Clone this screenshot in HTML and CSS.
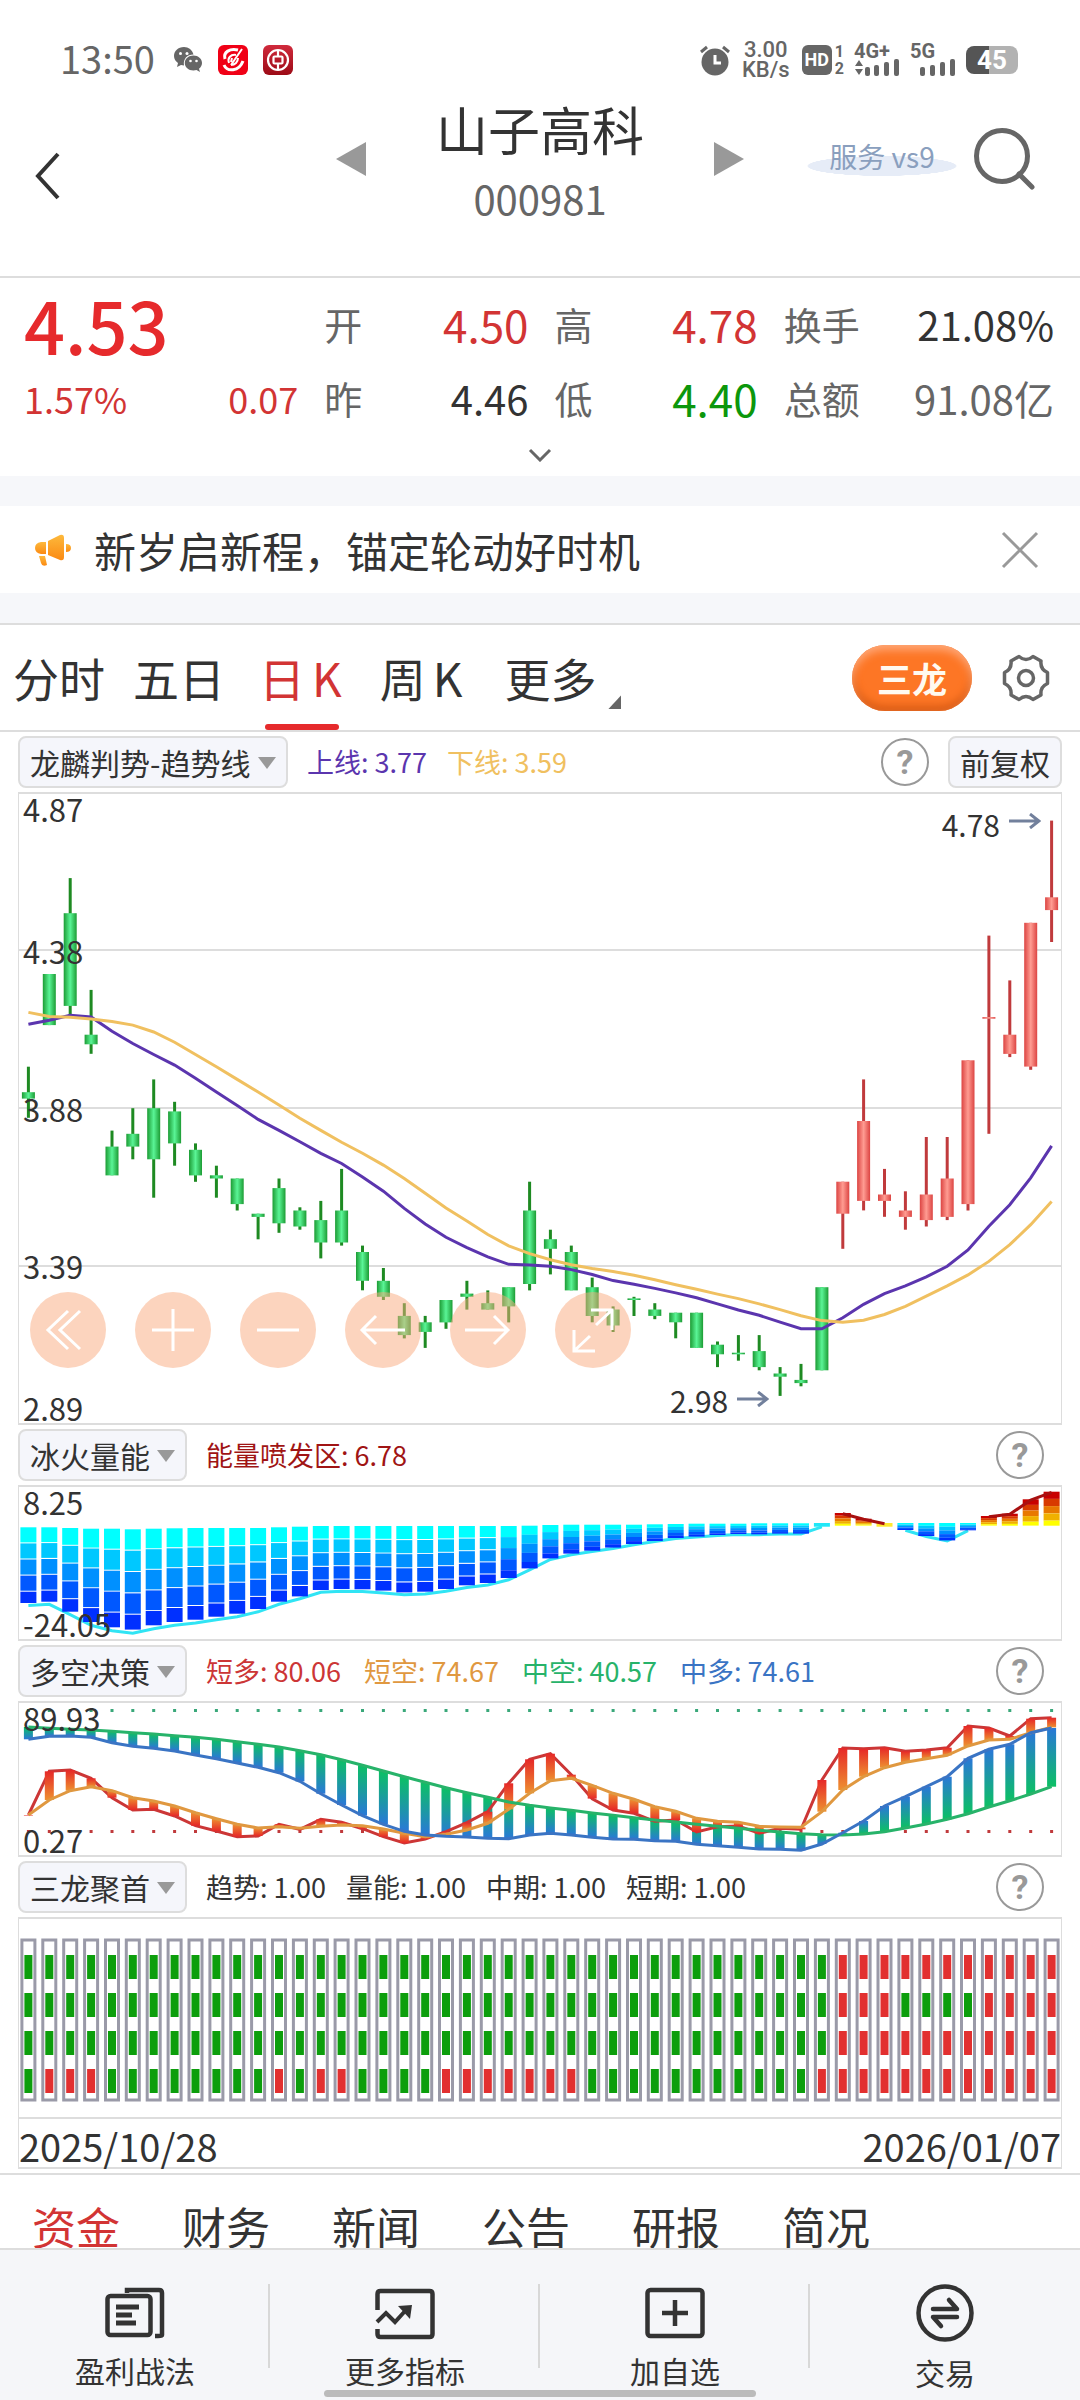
FILE: index.html
```html
<!DOCTYPE html>
<html lang="zh-CN">
<head>
<meta charset="utf-8">
<meta name="viewport" content="width=device-width, initial-scale=1">
<title>山子高科 000981</title>
<link rel="stylesheet" href="styles.css">
</head>
<body>
<div class="status">
  <span class="status-time">13:50</span>
  <svg class="status-wechat" width="30" height="28" viewBox="0 0 30 28"><path fill="#666" d="M11 1C5 1 1 5 1 10c0 3 1.500 5 4 7l-1 4 4-2c1 .3 2 .4 3 .4C10 13 14 8.500 20.500 8.500 19.500 4 15.500 1 11 1z"/><path fill="#666" d="M20.500 9.500c-5 0-8.700 3.300-8.700 7.500s3.700 7.500 8.700 7.500c1 0 2-.2 3-.5l3.500 2-1-3.300c2-1.500 3-3.500 3-5.700 0-4.200-3.800-7.500-8.500-7.500z"/><g fill="#fff"><circle cx="7.500" cy="7.500" r="1.500"/><circle cx="14" cy="7.500" r="1.500"/><circle cx="17.500" cy="15" r="1.300"/><circle cx="23.500" cy="15" r="1.300"/></g></svg>
  <svg class="status-app" width="30" height="30" viewBox="0 0 30 30"><rect width="30" height="30" rx="6" fill="#f00016"/><g fill="none" stroke="#fff"><path stroke-width="3" d="M20 5C12 3 5 7 7 14M6 20c3 7 15 7 19-4"/><path stroke-width="2" d="M24 4 13 20M18 10c-5-1-9 3-7 8M20 13c0 4-3 7-7 7M14 13l-1 4"/></g></svg>
  <svg class="status-app" width="30" height="30" viewBox="0 0 30 30"><defs><linearGradient id="bankRed" x2="0" y2="1"><stop stop-color="#d02a3c"/><stop offset="1" stop-color="#9c0b16"/></linearGradient></defs><rect width="30" height="30" rx="6" fill="url(#bankRed)"/><g fill="none" stroke="#fff" stroke-width="2.200"><circle cx="15" cy="15" r="10"/><rect x="10.500" y="11.500" width="9" height="7" rx="1"/><path d="M15 5v6.500M15 18.500V25"/></g></svg>
  <div class="status-right">
    <svg width="30" height="32" viewBox="0 0 30 32"><circle cx="15" cy="18" r="13.500" fill="#666"/><path d="M1 8l6-5M29 8l-6-5" stroke="#666" stroke-width="3"/><path d="M15 11v8h6" fill="none" stroke="#fff" stroke-width="3"/></svg>
    <span class="status-rate"><span>3.00</span><span>KB/s</span></span>
    <span class="status-hd">HD</span>
    <span class="status-sims"><span>1</span><span>2</span></span>
    <span class="signal"><span>4G+</span><svg width="46" height="17" viewBox="0 0 46 17" fill="#666"><path d="M5 1l4 6H1zM5 16l4-6H1z"/><rect x="11" y="8" width="5" height="9" rx="2"/><rect x="20" y="6" width="5" height="11" rx="2"/><rect x="30" y="3" width="5" height="14" rx="2"/><rect x="40" y="0" width="5" height="17" rx="2"/></svg></span>
    <span class="signal"><span>5G</span><svg width="46" height="17" viewBox="0 0 46 17" fill="#666"><rect x="10" y="8" width="5" height="9" rx="2"/><rect x="20" y="6" width="5" height="11" rx="2"/><rect x="30" y="3" width="5" height="14" rx="2"/><rect x="40" y="0" width="5" height="17" rx="2"/></svg></span>
    <span class="battery">45</span>
  </div>
</div>

<header class="header">
  <button class="icon-btn back" aria-label="返回"><svg width="28" height="48" viewBox="0 0 28 48"><path d="M24 2 4 24l20 22" fill="none" stroke="#333" stroke-width="4"/></svg></button>
  <div class="stock">
    <button class="icon-btn" aria-label="上一只"><svg width="30" height="34" viewBox="0 0 30 34"><path d="M0 17 30 0v34z" fill="#999"/></svg></button>
    <div class="stock-title">
      <h1>山子高科</h1>
      <p>000981</p>
    </div>
    <button class="icon-btn" aria-label="下一只"><svg width="30" height="34" viewBox="0 0 30 34"><path d="M30 17 0 0v34z" fill="#999"/></svg></button>
  </div>
  <div class="header-tools">
    <a class="service" href="#">服务 vs9</a>
    <button class="icon-btn" aria-label="搜索"><svg width="66" height="66" viewBox="0 0 66 66"><g fill="none" stroke="#666" stroke-width="5" stroke-linecap="round"><circle cx="30" cy="30" r="25.500"/><path d="M47 48l13 13"/></g></svg></button>
  </div>
</header>

<section class="quote">
  <div class="quote-grid">
    <div class="last">4.53</div>
    <div class="pair"><span>开</span><b class="up big">4.50</b></div>
    <div class="pair"><span>高</span><b class="up big">4.78</b></div>
    <div class="pair"><span>换手</span><b>21.08%</b></div>
    <div class="pair change up"><span>1.57%</span><b>0.07</b></div>
    <div class="pair"><span>昨</span><b>4.46</b></div>
    <div class="pair"><span>低</span><b class="down big">4.40</b></div>
    <div class="pair"><span>总额</span><b class="muted">91.08亿</b></div>
  </div>
  <button class="icon-btn expand" aria-label="展开"><svg width="24" height="14" viewBox="0 0 24 14"><path d="M2 2l10 10L22 2" fill="none" stroke="#666" stroke-width="3"/></svg></button>
</section>

<section class="notice">
  <svg width="36" height="32" viewBox="0 0 36 32"><defs><linearGradient id="horn" x2="0" y2="1"><stop stop-color="#fdb93c"/><stop offset="1" stop-color="#fb8a13"/></linearGradient></defs><g fill="url(#horn)"><path d="M13 7 25 1q4-1 4 3v19q0 4-4 3l-12-5z"/><path d="M11 8v12H6q-6-1-6-6t6-6z"/><path d="M4 22h6l2 9q-5 2-6-2z"/><path d="M31 10q5 0 5 4t-5 4z"/></g></svg>
  <p>新岁启新程，锚定轮动好时机</p>
  <button class="icon-btn" aria-label="关闭"><svg width="38" height="38" viewBox="0 0 38 38"><path d="M2 2l34 34M36 2 2 36" stroke="#999" stroke-width="3"/></svg></button>
</section>

<nav class="periods">
  <button class="period">分时</button>
  <button class="period">五日</button>
  <button class="period k active">日<span>K</span></button>
  <button class="period k">周<span>K</span></button>
  <button class="period more">更多</button>
  <button class="dragon">三龙</button>
  <button class="icon-btn" aria-label="设置"><svg width="48" height="48" viewBox="0 0 48 48"><g fill="none" stroke="#666" stroke-width="3.500" stroke-linejoin="round"><path d="M17 2.500q7 6 14 0l8 4.500q-1 8 6.500 11.500v11Q38 33 39 41l-8 4.500q-7-6-14 0L9 41q1-8-6.500-11.500v-11Q10 15 9 7z"/><circle cx="24" cy="24" r="7.500"/></g></svg></button>
</nav>

<main class="charts">
  <div class="ind">
    <label class="pick"><select aria-label="主图指标"><option>龙麟判势-趋势线</option></select></label>
    <div class="vals"><span class="c-purple">上线: 3.77</span><span class="c-gold">下线: 3.59</span></div>
    <button class="help" aria-label="帮助">?</button>
    <button class="adjust">前复权</button>
  </div>
  <div class="panel panel-main">
    <svg id="kline" class="plot" viewBox="1 2 1042 629" preserveAspectRatio="none"></svg>
    <div class="scale"><span>4.87</span><span>4.38</span><span>3.88</span><span>3.39</span><span>2.89</span></div>
    <div class="mark mark-high">4.78<svg width="32" height="16" viewBox="0 0 32 16"><path d="M0 8h29M21 1l9 7-9 7" fill="none" stroke="#72809c" stroke-width="3"/></svg></div>
    <div class="mark mark-low">2.98<svg width="32" height="16" viewBox="0 0 32 16"><path d="M0 8h29M21 1l9 7-9 7" fill="none" stroke="#72809c" stroke-width="3"/></svg></div>
    <div class="float">
      <button aria-label="最早"><svg viewBox="0 0 76 76"><path d="M38 19 18 38l20 19M50 19 30 38l20 19"/></svg></button>
      <button aria-label="放大"><svg viewBox="0 0 76 76"><path d="M17 38h42M38 17v42"/></svg></button>
      <button aria-label="缩小"><svg viewBox="0 0 76 76"><path d="M17 38h42"/></svg></button>
      <button aria-label="左移"><svg viewBox="0 0 76 76"><path d="M60 38H17M31 24 17 38l14 14"/></svg></button>
      <button aria-label="右移"><svg viewBox="0 0 76 76"><path d="M15 38h43M44 24l14 14-14 14"/></svg></button>
      <button aria-label="全屏"><svg viewBox="0 0 76 76"><path d="M36 18h21v20M57 18 41 33M19 38v21h21M19 59l16-15"/></svg></button>
    </div>
  </div>

  <div class="ind">
    <label class="pick"><select aria-label="副图一指标"><option>冰火量能</option></select></label>
    <div class="vals"><span class="c-dark">能量喷发区: 6.78</span></div>
    <button class="help help-end" aria-label="帮助">?</button>
  </div>
  <div class="panel panel-sub">
    <svg id="energy" class="plot" viewBox="1 2 1042 152" preserveAspectRatio="none"></svg>
    <div class="scale"><span>8.25</span><span>-24.05</span></div>
  </div>

  <div class="ind">
    <label class="pick"><select aria-label="副图二指标"><option>多空决策</option></select></label>
    <div class="vals vals-wide"><span class="c-red">短多: 80.06</span><span class="c-orange">短空: 74.67</span><span class="c-green">中空: 40.57</span><span class="c-blue">中多: 74.61</span></div>
    <button class="help help-end" aria-label="帮助">?</button>
  </div>
  <div class="panel panel-sub">
    <svg id="decision" class="plot" viewBox="1 2 1042 152" preserveAspectRatio="none"></svg>
    <div class="scale"><span>89.93</span><span>0.27</span></div>
  </div>

  <div class="ind">
    <label class="pick"><select aria-label="副图三指标"><option>三龙聚首</option></select></label>
    <div class="vals"><span>趋势: 1.00</span><span>量能: 1.00</span><span>中期: 1.00</span><span>短期: 1.00</span></div>
    <button class="help help-end" aria-label="帮助">?</button>
  </div>
  <div class="panel panel-grid">
    <svg id="dragons" class="plot" viewBox="1 2 1042 198" preserveAspectRatio="none"></svg>
  </div>
  <div class="dates"><span>2025/10/28</span><span>2026/01/07</span></div>
</main>

<nav class="info">
  <button class="active">资金</button><button>财务</button><button>新闻</button><button>公告</button><button>研报</button><button>简况</button>
</nav>

<footer class="dock">
  <a href="#"><svg width="60" height="60" viewBox="0 0 60 60"><g fill="none" stroke="#333" stroke-width="4.500"><rect x="2.500" y="13" width="43" height="39" rx="3"/><path d="M22 10V7h32q3 0 3 3v42q0 1-4 1h-3" /><path d="M11 24h23M11 32h16M11 40h20" stroke-width="5"/></g></svg>盈利战法</a>
  <a href="#"><svg width="60" height="60" viewBox="0 0 60 60"><g fill="none" stroke="#333" stroke-width="4.500"><path d="M2.500 27V11q0-3 3-3h49q3 0 3 3v40q0 3-3 3h-49q-3 0-3-3v-5"/><path d="M2 39l9-9 9 9 11-12" stroke-width="4"/></g><path d="M23 23l14-1-2 14z" fill="#333"/></svg>更多指标</a>
  <a href="#"><svg width="60" height="60" viewBox="0 0 60 60"><g fill="none" stroke="#333" stroke-width="4.500"><rect x="2.500" y="7" width="55" height="46" rx="3"/><path d="M17 30h26M30 17v26"/></g></svg>加自选</a>
  <a class="trade" href="#"><svg width="60" height="60" viewBox="0 0 60 60"><g fill="none" stroke="#333" stroke-width="4.500" stroke-linecap="round" stroke-linejoin="round"><circle cx="30" cy="30" r="26.500"/><path d="M18 26h24l-8-9M42 34H18l8 9"/></g></svg>交易</a>
  <i class="home-bar"></i>
</footer>
<script src="charts.js"></script>
</body>
</html>
```

FILE: styles.css
```css
* { box-sizing: border-box; }

body {
  margin: 0;
  min-height: 100vh;
  display: flex;
  flex-direction: column;
  background: #fff;
  color: #333;
  font-family: "Noto Sans CJK SC", "Noto Sans", sans-serif;
}

h1, p { margin: 0; font-weight: 400; }
svg { display: block; }
button, select {
  border: 0;
  padding: 0;
  background: none;
  color: inherit;
  font: inherit;
}
a { color: inherit; text-decoration: none; }

.icon-btn { display: flex; }

/* status bar */
.status {
  display: flex;
  align-items: center;
  height: 100px;
  padding: 20px 62px 0 60px;
  color: #666;
}
.status-time { font-size: 38px; line-height: 56px; padding-bottom: 4px; }
.status-wechat { margin-left: 18px; }
.status-app { margin-left: 15px; }
.status-right {
  display: flex;
  align-items: center;
  margin-left: auto;
  font-family: Roboto, sans-serif;
  font-weight: 500;
}
.status-rate {
  display: flex;
  flex-direction: column;
  width: 50px;
  margin: 0 11px;
  font-size: 22px;
  line-height: 20px;
  text-align: center;
}
.status-hd {
  width: 30px;
  border-radius: 6px;
  background: #666;
  color: #fff;
  font-size: 18px;
  line-height: 30px;
  font-weight: 700;
  text-align: center;
}
.status-sims {
  display: flex;
  flex-direction: column;
  margin: 0 10px 0 3px;
  font-size: 16px;
  line-height: 17px;
  font-weight: 700;
}
.signal {
  width: 46px;
  margin-right: 10px;
  font-size: 20px;
  line-height: 15px;
  font-weight: 700;
}
.signal > span { display: block; white-space: nowrap; }
.battery {
  width: 52px;
  border-radius: 8px;
  background: linear-gradient(90deg, #555 45%, #b2b2b2 45%);
  color: #fff;
  font-size: 26px;
  line-height: 28px;
  font-weight: 700;
  text-align: center;
}

/* title bar */
.header {
  display: grid;
  grid-template-columns: 1fr auto 1fr;
  height: 178px;
  padding: 0 42px 0 34px;
  border-bottom: 2px solid #ddd;
}
.back { align-self: start; margin-top: 52px; }
.stock { display: flex; gap: 66px; padding-left: 8px; }
.stock .icon-btn { align-self: start; margin-top: 42px; }
.stock-title { width: 216px; text-align: center; white-space: nowrap; }
.stock-title h1 { font-size: 52px; line-height: 58px; }
.stock-title p { color: #666; font-size: 40px; line-height: 80px; }
.header-tools { display: flex; justify-content: flex-end; align-items: flex-start; padding-top: 26px; gap: 15px; }
.service {
  width: 150px;
  height: 50px;
  background: radial-gradient(ellipse 75px 10px at 50% 40px, #e6ecf7 98%, transparent);
  color: #8a9fbe;
  font-size: 28px;
  line-height: 60px;
  text-align: center;
  white-space: nowrap;
}

/* quote block */
.quote {
  display: flex;
  flex-direction: column;
  align-items: center;
  height: 198px;
  padding-top: 9px;
}
.quote-grid {
  display: grid;
  grid-template-columns: 274fr 204fr 203fr 270fr;
  grid-auto-rows: 74px;
  column-gap: 26px;
  width: 100%;
  padding: 0 26px 0 24px;
  align-items: center;
}
.last { color: #e62a2c; font-size: 72px; line-height: 76px; font-weight: 500; }
.pair { display: flex; justify-content: space-between; align-items: center; color: #666; font-size: 38px; line-height: 72px; white-space: nowrap; }
.pair b { color: #333; font-size: 40px; font-weight: 400; }
.pair b.big { font-size: 44px; }
.pair b.up, .change.up, .change.up b { color: #d23434; }
.pair b.down { color: #0c970c; }
.pair b.muted { color: #666; }
.change, .change.up b { font-size: 36px; }
.expand { margin-top: 13px; }

/* notice strip */
.notice {
  display: flex;
  align-items: center;
  height: 147px;
  padding: 0 41px 0 35px;
  border: solid #f6f7fa;
  border-width: 30px 0;
}
.notice p { flex: 1; margin-left: 23px; font-size: 42px; line-height: 64px; }

/* period tabs */
.periods {
  display: flex;
  align-items: center;
  height: 109px;
  padding: 0 30px 0 13px;
  border: solid #ddd;
  border-width: 2px 0;
}
.period {
  position: relative;
  height: 105px;
  margin-right: 28px;
  font-size: 46px;
  line-height: 103px;
  white-space: nowrap;
}
.period span { margin-left: 7px; }
.period.k { padding: 0 4px 0 6px; }
.period.active { color: #d23434; }
.period.active::after {
  content: "";
  position: absolute;
  left: 12px;
  right: 7px;
  bottom: 0;
  height: 6px;
  border-radius: 3px;
  background: #e62a2c;
}
.period.more { margin-left: 10px; }
.period.more::after {
  content: "";
  position: absolute;
  right: -25px;
  bottom: 21px;
  width: 13px;
  height: 14px;
  background: #666;
  clip-path: polygon(100% 0, 100% 100%, 0 100%);
}
.dragon {
  width: 120px;
  height: 66px;
  margin: 0 30px 0 auto;
  border-radius: 33px;
  background: #fd7625;
  box-shadow: inset 0 5px 8px #ffa878, inset 0 -5px 8px #d85a14;
  color: #fffaf0;
  font-size: 35px;
  line-height: 64px;
  font-weight: 700;
}

/* indicator rows */
.charts { padding: 0 18px 4px; }
.ind { display: flex; align-items: center; height: 60px; }
.pick { position: relative; display: flex; }
.pick select {
  height: 52px;
  padding: 0 35px 0 10px;
  border: 2px solid #ddd;
  border-radius: 8px;
  background: #f5f6fb;
  appearance: none;
  font-size: 30px;
  line-height: 44px;
}
.pick::after {
  content: "";
  position: absolute;
  right: 12px;
  top: 21px;
  border: solid transparent;
  border-width: 12px 9px 0;
  border-top-color: #999;
}
.vals { display: flex; flex: 1; gap: 20px; margin-left: 19px; font-size: 27px; line-height: 40px; white-space: nowrap; }
.vals-wide { gap: 23px; }
.c-purple { color: #5b35ae; }
.c-gold { color: #f0c060; }
.c-dark { color: #a01414; }
.c-red { color: #cc3636; }
.c-orange { color: #e09840; }
.c-green { color: #27b36a; }
.c-blue { color: #3a74c4; }
.help {
  width: 48px;
  height: 48px;
  border: 2px solid #999;
  border-radius: 50%;
  color: #999;
  font: 700 34px/44px Roboto, sans-serif;
}
.help-end { margin-right: 18px; }
.adjust {
  height: 52px;
  margin-left: 19px;
  padding: 0 10px;
  border: 2px solid #ddd;
  border-radius: 8px;
  background: #f5f6fb;
  font-size: 30px;
  line-height: 46px;
}

/* chart panels */
.panel { position: relative; border: solid #ddd; border-width: 2px 1px; }
.panel-main { height: 633px; }
.panel-sub { height: 156px; }
.panel-grid { height: 202px; }
.plot { width: 100%; height: 100%; }
.scale {
  position: absolute;
  inset: 0 auto 0 4px;
  display: flex;
  flex-direction: column;
  justify-content: space-between;
  font-size: 31px;
  line-height: 30px;
}
/* the inner labels sit on the quarter lines */
.panel-main .scale {
  display: grid;
  grid-template-rows: 1fr 2fr 2fr 2fr 1fr;
  align-items: center;
}
.panel-main .scale span:first-child { align-self: start; }
.panel-main .scale span:last-child { align-self: end; }
.mark { position: absolute; display: flex; gap: 9px; font-size: 30px; line-height: 34px; }
.mark-high { right: 20px; top: 13px; }
.mark-high svg { margin-top: 6px; }
.mark-low { right: 28%; bottom: 6px; }
.mark-low svg { margin-top: 8px; }
.float { position: absolute; left: 11px; bottom: 55px; display: flex; gap: 29px; }
.float button { width: 76px; height: 76px; border-radius: 50%; background: rgba(250, 170, 125, .5); }
.float path { fill: none; stroke: #fff; stroke-width: 3; }
.dates {
  display: flex;
  justify-content: space-between;
  height: 50px;
  border: solid #ddd;
  border-width: 0 1px 2px;
  font-size: 38px;
  line-height: 54px;
}

/* info tabs */
.info {
  display: flex;
  flex: 0 0 75px;
  gap: 62px;
  padding: 19px 32px 0;
  border-top: 2px solid #ddd;
  overflow: hidden;
  align-items: flex-start;
}
.info button { font-size: 44px; line-height: 64px; white-space: nowrap; }
.info .active { color: #d23434; }

/* bottom dock */
.dock {
  position: relative;
  display: grid;
  grid-template-columns: repeat(4, 1fr);
  height: 152px;
  margin-top: auto;
  border-top: 2px solid #ddd;
  background: #f5f6f9;
}
.dock a {
  display: flex;
  flex-direction: column;
  align-items: center;
  padding-top: 33px;
  background: linear-gradient(#d8d8d8, #d8d8d8) right 34px / 2px 84px no-repeat;
  font-size: 30px;
  line-height: 54px;
}
.dock a.trade { background: none; line-height: 58px; }
.home-bar {
  position: absolute;
  left: 30%;
  right: 30%;
  bottom: 3px;
  height: 7px;
  border-radius: 4px;
  background: #bbb;
}
```

FILE: charts.js
```javascript
// 50 trading days, each SLOT units wide
const SLOT = 20.88;
const cx = i => SLOT * (i + 0.5);
const rect = (x, y, w, h, fill) =>
  `<rect x="${x.toFixed(1)}" y="${y.toFixed(1)}" width="${w}" height="${Math.max(h, 0.5).toFixed(1)}" fill="${fill}"/>`;
const line = (pts, color, w = 3) =>
  `<polyline points="${pts.map(p => p.map(n => n.toFixed(1)).join()).join(' ')}" fill="none" stroke="${color}" stroke-width="${w}"/>`;
const gradient = (id, stops, vertical) =>
  `<linearGradient id="${id}" ${vertical ? 'x2="0" y2="1"' : ''}>${stops.map((c, i) =>
    `<stop offset="${i / (stops.length - 1)}" stop-color="${c}"/>`).join('')}</linearGradient>`;

// --- daily candles: high, body top, body bottom, low ---
const candles = [
  [4.01,3.93,3.91,3.85],[4.30,4.30,4.14,4.14],[4.60,4.49,4.20,4.17],[4.25,4.11,4.08,4.05],[3.81,3.76,3.67,3.67],
  [3.88,3.80,3.76,3.72],[3.97,3.88,3.72,3.60],[3.90,3.87,3.77,3.70],[3.77,3.75,3.67,3.65],[3.70,3.67,3.66,3.60],
  [3.66,3.66,3.58,3.56],[3.55,3.55,3.54,3.47],[3.66,3.63,3.52,3.49],[3.57,3.56,3.51,3.50],[3.59,3.53,3.46,3.41],
  [3.69,3.56,3.46,3.45],[3.45,3.43,3.34,3.31],[3.38,3.34,3.29,3.28],[3.27,3.23,3.17,3.16],[3.23,3.21,3.18,3.13],
  [3.28,3.28,3.21,3.19],[3.34,3.30,3.29,3.25],[3.31,3.27,3.25,3.25],[3.32,3.32,3.26,3.21],[3.65,3.56,3.33,3.31],
  [3.50,3.47,3.44,3.36],[3.45,3.43,3.31,3.31],[3.35,3.32,3.23,3.21],[3.26,3.25,3.20,3.18],[3.29,3.285,3.28,3.23],
  [3.27,3.25,3.23,3.22],[3.24,3.24,3.21,3.16],[3.24,3.24,3.13,3.13],[3.15,3.14,3.11,3.07],[3.17,3.115,3.11,3.09],
  [3.17,3.12,3.07,3.06],[3.07,3.05,3.04,2.98],[3.08,3.03,3.02,3.01],[3.32,3.32,3.06,3.06],[3.65,3.65,3.55,3.44],
  [3.97,3.84,3.59,3.56],[3.69,3.61,3.59,3.54],[3.62,3.56,3.54,3.50],[3.79,3.61,3.53,3.51],[3.79,3.66,3.54,3.53],
  [4.03,4.03,3.58,3.56],[4.42,4.165,4.16,3.80],[4.28,4.11,4.05,4.04],[4.46,4.46,4.01,4.00],[4.78,4.54,4.50,4.40]
];
const upper = [574,564,552,556,591,621,648,674,706,740,773,807,834,862,890,915,948,983,1025,1063,1096,1121,1144,1162,1164,1167,1175,1187,1202,1211,1221,1232,1244,1259,1274,1287,1304,1320,1320,1293,1260,1234,1215,1193,1167,1127,1069,1016,950,872];
const lower = [545,555,557,561,567,576,593,618,648,678,709,740,772,804,834,863,890,919,952,988,1024,1056,1089,1117,1136,1151,1163,1172,1180,1189,1200,1212,1223,1235,1246,1259,1273,1288,1300,1304,1299,1285,1265,1240,1215,1188,1155,1114,1065,1008];
const priceY = p => 158 + (4.375 - p) * 319.6;
const trendY = v => v / 2.45 - 2;

let out = '<defs>' + gradient('fall', ['#1c9c34', '#5af596', '#1c9c34']) + gradient('rise', ['#dc4442', '#ff9c92', '#dc4442']) + '</defs>';
[158, 316, 474].forEach(y => { out += rect(0, y - 1, 1044, 2, '#ddd'); });
candles.forEach(([hi, top, bot, lo], i) => {
  const up = i > 38;
  out += rect(cx(i) - 1.5, priceY(hi), 3, priceY(lo) - priceY(hi), up ? '#c03a3c' : '#1e8a22');
  out += rect(cx(i) - 6.5, priceY(top), 13, priceY(bot) - priceY(top), up ? 'url(#rise)' : 'url(#fall)');
});
out += line(upper.map((v, i) => [cx(i), trendY(v)]), '#5b35ae');
out += line(lower.map((v, i) => [cx(i), trendY(v)]), '#f0c060');
document.getElementById('kline').innerHTML = out;

// --- energy bars: top, bottom ---
const energy = [
  [322,549],[322,545],[324,575],[326,606],[326,622],[328,629],[326,616],[325,606],[324,599],[324,590],
  [324,581],[324,567],[322,545],[320,529],[318,510],[318,507],[318,508],[318,512],[318,517],[318,515],
  [318,507],[318,496],[318,489],[318,474],[317,445],[315,415],[314,401],[314,392],[314,383],[314,372],
  [313,363],[312,354],[311,350],[311,345],[311,342],[310,343],[310,341],[310,341],[309,320],[279,317],
  [296,317],[309,320],[309,330],[309,348],[309,361],[309,331],[288,317],[281,317],[238,317],[215,317]
];
const energyY = v => v / 3 - 65;
const isFire = i => (i >= 39 && i <= 41) || i >= 46;
const ice = ['#00ffff', '#00c8ff', '#0090ff', '#0058ff', '#0030ff'];
const fire = ['#c80000', '#d83a00', '#e87800', '#f0b000', '#ffff00'];
out = '';
[[0, 38, '#30e4f4'], [42, 45, '#30e4f4']].forEach(([from, to, color]) => {
  const pts = [];
  for (let i = from; i <= to; i++) {
    const [t, b] = energy[i];
    pts.push([cx(i), energyY(b + (b - t) * 0.035)]);
  }
  out += line(pts, color);
});
energy.forEach(([t, b], i) => {
  const step = (energyY(b) - energyY(t)) / 4.7;
  const gap = step > 12 ? 1 : 0;
  let palette = isFire(i) ? fire : ice;
  if (i === 38) palette = ['#20e8f8'];
  if (i === 41) palette = ['#ffe830'];
  if (palette.length === 1) {
    out += rect(cx(i) - 8, energyY(t), 16, energyY(b) - energyY(t), palette[0]);
    return;
  }
  palette.forEach((c, k) => {
    const y = energyY(t) + step * k;
    out += rect(cx(i) - 8, y, 16, Math.min(step - gap, energyY(b) - y), c);
  });
});
[[39, 41], [46, 49]].forEach(([from, to]) => {
  const pts = [];
  for (let i = from; i <= to; i++) pts.push([cx(i), energyY(energy[i][0] + 2)]);
  out += line(pts, '#a81010');
});
document.getElementById('energy').innerHTML = out;

// --- long/short decision lines ---
const midShort = [921,925,928,930,934,938,942,947,952,958,965,973,981,992,1004,1019,1036,1053,1070,1087,1103,1118,1132,1146,1156,1164,1171,1179,1186,1193,1200,1206,1213,1219,1225,1231,1236,1241,1244,1245,1242,1235,1224,1212,1198,1181,1161,1142,1122,1100];
const midLong = [958,949,948,952,968,979,985,993,1005,1016,1029,1042,1058,1084,1121,1155,1187,1213,1234,1245,1249,1251,1255,1256,1245,1240,1245,1252,1257,1258,1262,1264,1273,1277,1282,1287,1288,1291,1272,1238,1203,1158,1130,1100,1070,1015,988,973,938,924];
const fastLong = [1185,1054,1050,1075,1133,1170,1168,1188,1217,1233,1250,1248,1213,1228,1198,1207,1226,1250,1269,1257,1235,1208,1175,1090,1018,1001,1064,1136,1170,1180,1204,1200,1236,1220,1218,1240,1225,1228,1080,984,986,983,994,990,983,918,924,948,896,893];
const fastShort = [1185,1140,1112,1100,1112,1133,1143,1158,1178,1196,1213,1224,1220,1225,1219,1215,1217,1227,1240,1250,1243,1230,1210,1168,1120,1082,1075,1096,1120,1138,1160,1174,1195,1204,1207,1219,1221,1222,1175,1110,1070,1043,1027,1016,1006,978,960,958,938,922];
const decY = v => v / 3 - 281;
out = '<defs>' + gradient('gb', ['#0cc064', '#2a78d8'], true) + gradient('bg', ['#2a78d8', '#0cc064'], true)
  + gradient('ro', ['#e62828', '#ee9030'], true) + gradient('or', ['#ee9030', '#e62828'], true) + '</defs>';
for (let i = 0; i < 50; i++) {
  out += rect(cx(i) - 1.5, decY(867), 3, 3, '#3aa87a') + rect(cx(i) - 1.5, decY(1230), 3, 3, '#c03a3c');
}
const bridge = (a, b, down, up) => {
  a.forEach((v, i) => {
    const y = Math.min(v, b[i]), h = Math.abs(v - b[i]);
    out += rect(cx(i) - 4.5, decY(y), 9, h / 3, `url(#${v < b[i] ? down : up})`);
  });
};
bridge(midShort, midLong, 'gb', 'bg');
out += line(fastLong.map((v, i) => [cx(i), decY(v)]), '#cc3636');
bridge(fastLong, fastShort, 'ro', 'or');
out += line(fastShort.map((v, i) => [cx(i), decY(v)]), '#e09840');
out += line(midShort.map((v, i) => [cx(i), decY(v)]), '#27b36a');
out += line(midLong.map((v, i) => [cx(i), decY(v)]), '#3a74c4');
document.getElementById('decision').innerHTML = out;

// --- three dragons: four signal rows ---
const shortRed = new Set([1, 2, 3, 12, 14, 15, 20, 21, 22, 23, 24, 25, 26, 38]);
const rows = [
  i => i > 38,
  i => i > 38 && !(i >= 42 && i <= 45),
  i => i > 38,
  i => i > 38 || shortRed.has(i)
];
out = '';
for (let i = 0; i < 50; i++) {
  out += `<rect x="${(cx(i) - 6.5).toFixed(1)}" y="23" width="13" height="160" fill="none" stroke="#9a9aa8" stroke-width="3"/>`;
  rows.forEach((red, r) => { out += rect(cx(i) - 4, 38 + 38 * r, 8, 24, red(i) ? '#e23030' : '#0c9e0c'); });
}
document.getElementById('dragons').innerHTML = out;
```
